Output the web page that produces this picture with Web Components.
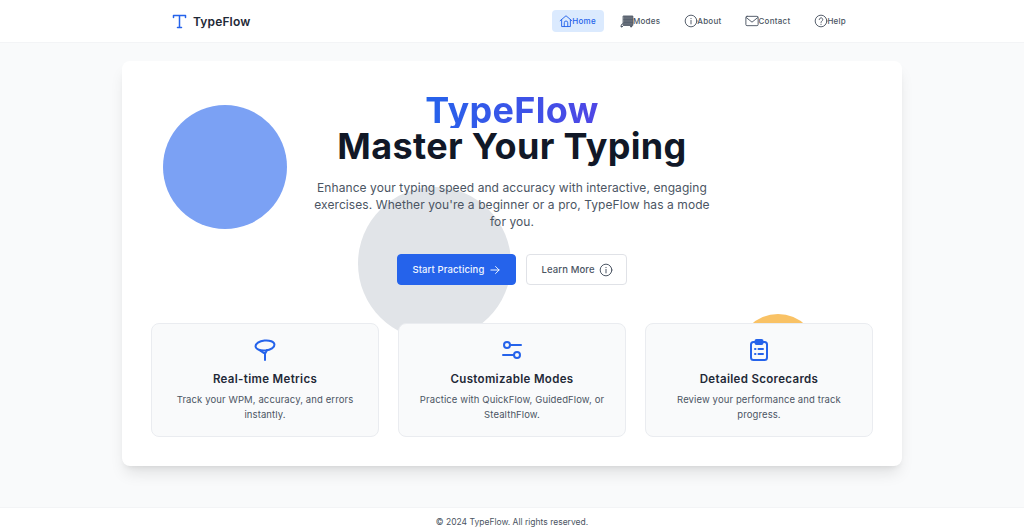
<!DOCTYPE html>
<html lang="en">
<head>
<meta charset="utf-8">
<title>TypeFlow</title>
<style>
	html, body { margin: 0; height: 100%; }
	body {
		display: flex;
		flex-direction: column;
		height: 528px;
		overflow: hidden;
		background: #f9fafb;
		font-family: Inter, "Liberation Sans", sans-serif;
		color: #111827;
	}
</style>
</head>
<body>
<site-header></site-header>
<hero-panel></hero-panel>
<site-footer>© 2024 TypeFlow. All rights reserved.</site-footer>

<script>
const ICONS = {
	home: '<path d="M2 11.5 12 3l10 8.5"/><path d="M4.5 9.5V21.5h15V9.5"/><path d="M9 21.5V15a3 3 0 0 1 6 0v6.5"/>',
	modes: '<path d="M6 3.5h16v16H6z" fill="currentColor" fill-opacity=".85"/><path d="M6 9.5h16M6 14.5h16" stroke-opacity=".5"/><path d="M6 17H3.5L2 19.5V21"/><circle cx="3" cy="21.5" r="1" fill="currentColor"/><circle cx="19" cy="21.5" r="1" fill="currentColor"/>',
	info: '<circle cx="12" cy="12" r="10"/><path d="M12 11v6M12 7.5v.5"/>',
	mail: '<rect x="1.5" y="4" width="21" height="16" rx="2"/><path d="m2 6 10 8 10-8"/>',
	help: '<circle cx="12" cy="12" r="10"/><path d="M9 9.5a3 3 0 1 1 4.500 2.600c-1 .6-1.500 1.200-1.500 2.400M12 17.500v.5"/>',
	arrow: '<path d="M5 12h14M13 6l6 6-6 6"/>',
	metrics: '<ellipse cx="12" cy="7.5" rx="9.5" ry="5" transform="rotate(-6 12 7.5)"/><path d="M7 12.5c1.500 1 3 2 4 2.500h1.500c.5-.8 1-1.600 1.500-3M12 15v7"/>',
	sliders: '<circle cx="7" cy="7" r="3"/><path d="M10 7h11"/><circle cx="17" cy="17" r="3"/><path d="M3 17h11"/>',
	clipboard: '<rect x="4" y="4" width="16" height="18" rx="2.5"/><rect x="8.5" y="2" width="7" height="4" rx="1"/><path d="M8 11h.5M11.500 11H16M8 16h.5M11.500 16H16"/>',
};

const iconTemplate = document.createElement('template');
iconTemplate.innerHTML = /* html */`
<style>
	:host { display: inline-flex; flex: none; width: var(--size, 13px); height: var(--size, 13px); }
	svg { width: 100%; height: 100%; fill: none; stroke: currentColor; stroke-width: var(--weight, 1.8); stroke-linecap: round; stroke-linejoin: round; }
</style>
<svg viewBox="0 0 24 24" aria-hidden="true"></svg>
`;

class UiIcon extends HTMLElement {
	static get observedAttributes() { return ['name']; }

	constructor() {
		super();
		const shadowRoot = this.attachShadow({ mode: 'open' });
		shadowRoot.appendChild(iconTemplate.content.cloneNode(true));
	}

	attributeChangedCallback(name, oldValue, value) {
		this.shadowRoot.querySelector('svg').innerHTML = ICONS[value] || '';
	}
}
customElements.define('ui-icon', UiIcon);

const navLinkTemplate = document.createElement('template');
navLinkTemplate.innerHTML = /* html */`
<style>
	:host {
		display: flex;
		align-items: center;
		height: 22px;
		padding: 0 8px;
		border-radius: 4px;
		font-size: 8px;
		letter-spacing: .25px;
		font-weight: 500;
		color: #4b5563;
	}
	:host([active]) { background: #dbeafe; color: #2563eb; }
	ui-icon { --size: 14px; --weight: 1.6; margin: 0 -1px; }
</style>
<ui-icon></ui-icon><slot></slot>
`;

class NavLink extends HTMLElement {
	constructor() {
		super();
		this.attachShadow({ mode: 'open' }).appendChild(navLinkTemplate.content.cloneNode(true));
	}

	connectedCallback() {
		this.shadowRoot.querySelector('ui-icon').setAttribute('name', this.getAttribute('icon'));
	}
}
customElements.define('nav-link', NavLink);

const headerTemplate = document.createElement('template');
headerTemplate.innerHTML = /* html */`
<style>
	:host {
		display: flex;
		flex: none;
		justify-content: center;
		height: 42px;
		background: #fff;
		border-bottom: 1px solid #f3f4f6;
	}
	.inner {
		display: flex;
		align-items: center;
		justify-content: space-between;
		width: 680px;
	}
	.brand {
		display: flex;
		align-items: center;
		gap: 6px;
		font-size: 12px;
		letter-spacing: .15px;
		font-weight: 600;
		color: #1f2937;
	}
	.logo { width: 15px; height: 15px; fill: none; stroke: #2563eb; stroke-width: 1.5; stroke-linecap: round; stroke-linejoin: round; }
	nav { display: flex; align-items: center; gap: 9px; margin-right: -2px; }
</style>
<div class="inner">
	<div class="brand">
		<svg class="logo" viewBox="0 0 15 15"><path d="M1.5 3.5V1.5h12v2M7.5 1.5v12M5.5 13.5h4"/></svg>
		<span>TypeFlow</span>
	</div>
	<nav>
		<nav-link icon="home" active>Home</nav-link>
		<nav-link icon="modes">Modes</nav-link>
		<nav-link icon="info">About</nav-link>
		<nav-link icon="mail">Contact</nav-link>
		<nav-link icon="help">Help</nav-link>
	</nav>
</div>
`;

class SiteHeader extends HTMLElement {
	constructor() {
		super();
		this.attachShadow({ mode: 'open' }).appendChild(headerTemplate.content.cloneNode(true));
	}
}
customElements.define('site-header', SiteHeader);

const actionTemplate = document.createElement('template');
actionTemplate.innerHTML = /* html */`
<style>
	:host {
		display: inline-flex;
		align-items: center;
		gap: 5px;
		box-sizing: border-box;
		height: 31px;
		padding: 0 14px;
		border-radius: 4px;
		border: 1px solid #e0e2e7;
		background: #fff;
		font-size: 9.5px;
		letter-spacing: .12px;
		font-weight: 500;
		color: #4b5563;
	}
	:host([primary]) { background: #2563eb; border-color: #2563eb; color: #eff6ff; }
	ui-icon { --size: 14px; --weight: 1.7; margin: 0 -1px; }
</style>
<slot></slot><ui-icon></ui-icon>
`;

class ActionButton extends HTMLElement {
	constructor() {
		super();
		this.attachShadow({ mode: 'open' }).appendChild(actionTemplate.content.cloneNode(true));
	}

	connectedCallback() {
		this.shadowRoot.querySelector('ui-icon').setAttribute('name', this.getAttribute('icon'));
	}
}
customElements.define('action-button', ActionButton);

const featureTemplate = document.createElement('template');
featureTemplate.innerHTML = /* html */`
<style>
	:host {
		display: flex;
		flex-direction: column;
		align-items: center;
		box-sizing: border-box;
		height: 114px;
		padding: 14px 16px 0;
		background: #f9fafb;
		border: 1px solid #eaecf0;
		border-radius: 8px;
		text-align: center;
		position: relative;
	}
	ui-icon { --size: 24px; --weight: 2; color: #2563eb; }
	h3 { margin: 9px 0 0; font-size: 11.5px; letter-spacing: .33px; line-height: 16px; font-weight: 600; color: #1f2937; }
	p { margin: 5px 0 0; font-size: 9.5px; letter-spacing: .11px; line-height: 15px; color: #4b5563; }
</style>
<ui-icon></ui-icon>
<h3></h3>
<p><slot></slot></p>
`;

class FeatureCard extends HTMLElement {
	constructor() {
		super();
		this.attachShadow({ mode: 'open' }).appendChild(featureTemplate.content.cloneNode(true));
	}

	connectedCallback() {
		this.shadowRoot.querySelector('ui-icon').setAttribute('name', this.getAttribute('icon'));
		this.shadowRoot.querySelector('h3').textContent = this.getAttribute('heading');
	}
}
customElements.define('feature-card', FeatureCard);

const heroTemplate = document.createElement('template');
heroTemplate.innerHTML = /* html */`
<style>
	:host {
		display: flex;
		flex: 1;
		justify-content: center;
		padding-top: 18px;
	}
	.card {
		position: relative;
		box-sizing: border-box;
		width: 780px;
		height: 405px;
		padding: 31px 29px 0;
		background: #fff;
		border-radius: 8px;
		box-shadow: 0 10px 15px -3px rgba(0, 0, 0, .1), 0 4px 6px -4px rgba(0, 0, 0, .1);
		overflow: hidden;
	}
	.blob { position: absolute; border-radius: 50%; }
	.blue { left: 41px; top: 44px; width: 124px; height: 124px; background: #7ba1f4; }
	.grey { left: 236px; top: 126px; width: 153px; height: 153px; background: #e1e4e8; }
	.orange { left: 616px; top: 253px; width: 80px; height: 80px; background: #f9c265; }
	.content { position: relative; display: flex; flex-direction: column; align-items: center; }
	h1 {
		margin: 0;
		font-size: 36px;
		line-height: 36px;
		letter-spacing: .34px;
		font-weight: 700;
		text-align: center;
		color: #111827;
	}
	h1 span {
		display: block;
		width: fit-content;
		margin: 0 auto;
		background: linear-gradient(90deg, #2563eb, #4f46e5);
		-webkit-background-clip: text;
		background-clip: text;
		color: transparent;
	}
	.lead {
		width: 402px;
		margin: 15px 0 0;
		font-size: 12px;
		letter-spacing: .08px;
		line-height: 17px;
		text-align: center;
		color: #4b5563;
	}
	.actions { display: flex; gap: 10px; margin-top: 24px; }
	.features { display: grid; grid-template-columns: repeat(3, 228px); gap: 19px; margin-top: 38px; }
</style>
<section class="card">
	<div class="blob blue"></div>
	<div class="blob grey"></div>
	<div class="blob orange"></div>
	<div class="content">
		<h1><span>TypeFlow</span>Master Your Typing</h1>
		<p class="lead">Enhance your typing speed and accuracy with interactive, engaging exercises. Whether you're a beginner or a pro, TypeFlow has a mode for you.</p>
		<div class="actions">
			<action-button primary icon="arrow">Start Practicing</action-button>
			<action-button icon="info">Learn More</action-button>
		</div>
		<div class="features">
			<feature-card icon="metrics" heading="Real-time Metrics">Track your WPM, accuracy, and errors instantly.</feature-card>
			<feature-card icon="sliders" heading="Customizable Modes">Practice with QuickFlow, GuidedFlow, or StealthFlow.</feature-card>
			<feature-card icon="clipboard" heading="Detailed Scorecards">Review your performance and track progress.</feature-card>
		</div>
	</div>
</section>
`;

class HeroPanel extends HTMLElement {
	constructor() {
		super();
		this.attachShadow({ mode: 'open' }).appendChild(heroTemplate.content.cloneNode(true));
	}
}
customElements.define('hero-panel', HeroPanel);

const footerTemplate = document.createElement('template');
footerTemplate.innerHTML = /* html */`
<style>
	:host {
		display: flex;
		flex: none;
		justify-content: center;
		align-items: flex-end;
		box-sizing: border-box;
		height: 21px;
		padding-bottom: 1px;
		background: #fff;
		border-top: 1px solid #f3f4f6;
		font-size: 8.5px;
		color: #4b5563;
	}
</style>
<slot></slot>
`;

class SiteFooter extends HTMLElement {
	constructor() {
		super();
		this.attachShadow({ mode: 'open' }).appendChild(footerTemplate.content.cloneNode(true));
	}
}
customElements.define('site-footer', SiteFooter);
</script>
</body>
</html>
